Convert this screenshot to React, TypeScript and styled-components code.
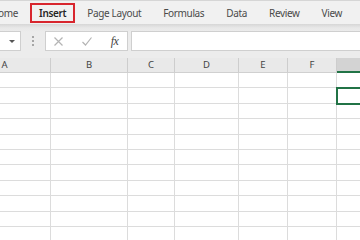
import React from "react";
import styled, { createGlobalStyle } from "styled-components";

const Global = createGlobalStyle`
  html, body { margin: 0; padding: 0; background: #fff; }
  body { width: 360px; height: 240px; overflow: hidden; font-family: "Noto Sans", "Liberation Sans", sans-serif; }
`;

const Page = styled.div`
  width: 360px;
  height: 240px;
  overflow: hidden;
  display: flex;
  flex-direction: column;
`;

const TabBar = styled.div`
  height: 24px;
  flex: none;
  display: flex;
  align-items: center;
  background: #f1f1f1;
  border-top: 1px solid #d6d6d6;
  box-sizing: border-box;
  margin-left: -20px;
  white-space: nowrap;
`;

const Tab = styled.div<{ $boxed?: boolean }>`
  height: 22px;
  display: flex;
  align-items: center;
  padding: 1px ${(p) => (p.$boxed ? "10px" : "11px")} 0;
  box-sizing: border-box;
  font-size: 10px;
  letter-spacing: -0.35px;
  color: ${(p) => (p.$boxed ? "#262626" : "#4a4a4a")};
  font-weight: ${(p) => (p.$boxed ? 600 : 400)};
  outline: ${(p) => (p.$boxed ? "2px solid #d8262e" : "none")};
  outline-offset: -3px;
`;

const FormulaBar = styled.div`
  height: 34px;
  flex: none;
  display: flex;
  align-items: flex-start;
  padding-top: 7px;
  box-sizing: border-box;
  background: linear-gradient(#d6d6d6, #e8e8e8 4px, #ececec 8px, #ececec);
`;

const NameBox = styled.div`
  width: 21px;
  height: 20px;
  flex: none;
  box-sizing: border-box;
  background: #fff;
  border: 1px solid #cfcfcf;
  border-left: none;
  display: flex;
  align-items: center;
  justify-content: flex-end;
  padding-right: 5px;
`;

const Caret = styled.div`
  width: 0;
  height: 0;
  border-left: 3px solid transparent;
  border-right: 3px solid transparent;
  border-top: 3px solid #555;
`;

const Grip = styled.div`
  width: 2px;
  height: 10px;
  flex: none;
  margin: 5px 11px 0 11px;
  background-image: linear-gradient(#a6a6a6 50%, transparent 50%);
  background-size: 2px 4px;
`;

const ButtonBox = styled.div`
  width: 83px;
  height: 20px;
  flex: none;
  box-sizing: border-box;
  background: #fff;
  border: 1px solid #cfcfcf;
  display: flex;
  align-items: center;
  padding-left: 6px;
  gap: 15px;
`;

const IconSlot = styled.div`
  width: 13px;
  height: 13px;
  display: flex;
  align-items: center;
  justify-content: center;
`;

const Fx = styled.span`
  font-family: "Liberation Serif", serif;
  font-style: italic;
  font-size: 12px;
  color: #444;
  letter-spacing: -0.5px;
`;

const Input = styled.div`
  flex: 1;
  height: 20px;
  margin-left: 3px;
  box-sizing: border-box;
  background: #fff;
  border: 1px solid #cfcfcf;
  border-right: none;
`;

const SheetClip = styled.div`
  flex: 1;
  overflow: hidden;
`;

const Sheet = styled.div<{ $cols: string }>`
  display: grid;
  grid-template-columns: ${(p) => p.$cols};
  grid-template-rows: 15px repeat(11, 15.4px);
  margin-left: -41px;
  width: max-content;
`;

const HeaderCell = styled.div<{ $selected?: boolean }>`
  box-sizing: border-box;
  background: ${(p) => (p.$selected ? "#d3d3d3" : "#e9e9e9")};
  border-right: 1px solid #cdcdcd;
  border-bottom: ${(p) => (p.$selected ? "2px solid #217346" : "1px solid #d0d0d0")};
  display: flex;
  align-items: center;
  justify-content: center;
  padding-bottom: 2px;
  font-size: 9.5px;
  color: #444;
`;

const Cell = styled.div<{ $selected?: boolean }>`
  box-sizing: border-box;
  border-right: 1px solid #dcdcdc;
  border-bottom: 1px solid #dcdcdc;
  background: #fff;
  outline: ${(p) => (p.$selected ? "2px solid #217346" : "none")};
  outline-offset: -1px;
  position: relative;
  z-index: ${(p) => (p.$selected ? 1 : 0)};
`;

const columns = [
  { label: "A", width: 92 },
  { label: "B", width: 77 },
  { label: "C", width: 47 },
  { label: "D", width: 64 },
  { label: "E", width: 49 },
  { label: "F", width: 49 },
  { label: "G", width: 64 },
];

const tabs = ["Home", "Insert", "Page Layout", "Formulas", "Data", "Review", "View"];

const CrossIcon = () => (
  <svg width="11" height="11" viewBox="0 0 11 11">
    <path d="M1.5 1.5 L9.5 9.5 M9.5 1.5 L1.5 9.5" stroke="#b4b4b4" strokeWidth="1.2" fill="none" />
  </svg>
);

const CheckIcon = () => (
  <svg width="12" height="11" viewBox="0 0 12 11">
    <path d="M1.5 6 L4.5 9 L10.5 1.5" stroke="#b4b4b4" strokeWidth="1.2" fill="none" />
  </svg>
);

export default function App() {
  const rows = 11;
  return (
    <>
      <Global />
      <Page>
        <TabBar>
          {tabs.map((t) => (
            <Tab key={t} $boxed={t === "Insert"}>
              {t}
            </Tab>
          ))}
        </TabBar>
        <FormulaBar>
          <NameBox>
            <Caret />
          </NameBox>
          <Grip />
          <ButtonBox>
            <IconSlot>
              <CrossIcon />
            </IconSlot>
            <IconSlot>
              <CheckIcon />
            </IconSlot>
            <IconSlot>
              <Fx>fx</Fx>
            </IconSlot>
          </ButtonBox>
          <Input />
        </FormulaBar>
        <SheetClip>
          <Sheet $cols={columns.map((c) => `${c.width}px`).join(" ")}>
            {columns.map((c) => (
              <HeaderCell key={c.label} $selected={c.label === "G"}>
                {c.label}
              </HeaderCell>
            ))}
            {Array.from({ length: rows }).flatMap((_, r) =>
              columns.map((c) => (
                <Cell key={`${c.label}${r}`} $selected={c.label === "G" && r === 1} />
              ))
            )}
          </Sheet>
        </SheetClip>
      </Page>
    </>
  );
}
